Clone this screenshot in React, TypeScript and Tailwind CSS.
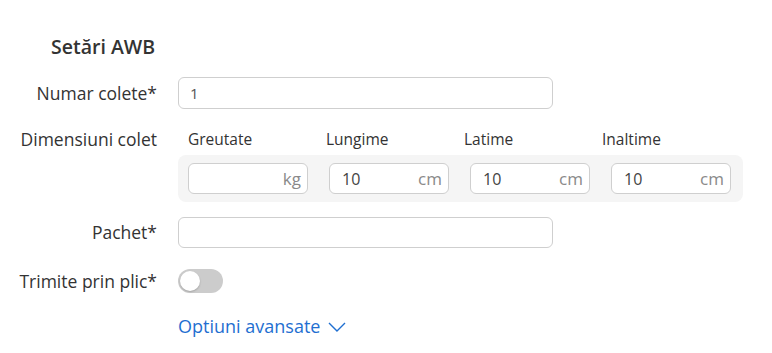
const dims = [
  { label: 'Greutate', value: '', unit: 'kg' },
  { label: 'Lungime', value: '10', unit: 'cm' },
  { label: 'Latime', value: '10', unit: 'cm' },
  { label: 'Inaltime', value: '10', unit: 'cm' },
]

function Label({ children, className = '' }: { children: React.ReactNode; className?: string }) {
  return <div className={`w-[157px] shrink-0 text-right text-[17.5px] text-[#333] ${className}`}>{children}</div>
}

export default function App() {
  return (
    <div className="h-[353px] w-[772px] bg-white pt-[33px] text-[#333]" style={{ fontFamily: '"Open Sans", sans-serif' }}>
      <h2 className="ml-[51px] text-[19.5px] font-semibold leading-[28px] text-[#333]">Setări AWB</h2>

      <div className="mt-[16px] flex items-center gap-[21px]">
        <Label>Numar colete*</Label>
        <div className="flex h-[32px] w-[375px] items-center rounded-[6px] border border-[#cfcfcf] px-[11px] text-[15px] text-[#555]">
          1
        </div>
      </div>

      <div className="mt-[18px] flex gap-[21px]">
        <Label className="leading-[24px]">Dimensiuni colet</Label>
        <div>
          <div className="flex pl-[10px] text-[15.5px] leading-[24px] text-[#333]">
            {dims.map((d) => (
              <div key={d.label} className="w-[138px]">{d.label}</div>
            ))}
          </div>
          <div className="mt-[4px] flex w-[565px] gap-[21px] rounded-[8px] bg-[#f5f5f5] px-[10px] py-[8px]">
            {dims.map((d) => (
              <div
                key={d.label}
                className="flex h-[31px] w-[120px] items-center justify-between rounded-[6px] border border-[#cfcfcf] bg-white pl-[12px] pr-[6px]"
              >
                <span className="text-[16px] text-[#444]">{d.value}</span>
                <span className="text-[17px] text-[#8a8a8a]">{d.unit}</span>
              </div>
            ))}
          </div>
        </div>
      </div>

      <div className="mt-[15px] flex items-center gap-[21px]">
        <Label>Pachet*</Label>
        <div className="h-[31px] w-[375px] rounded-[6px] border border-[#cfcfcf]" />
      </div>

      <div className="mt-[20px] flex items-center gap-[21px]">
        <Label>Trimite prin plic*</Label>
        <div className="flex h-[24px] w-[45px] items-center rounded-full bg-[#cccccc] px-[2px]">
          <div className="h-[20px] w-[20px] rounded-full bg-white shadow-[0_1px_2px_rgba(0,0,0,0.2)]" />
        </div>
      </div>

      <div className="mt-[19px] flex items-center gap-[8px] pl-[178px] text-[18px] text-[#1f6fd1]">
        <span>Optiuni avansate</span>
        <svg width="18" height="10" viewBox="0 0 18 10" fill="none" stroke="currentColor" strokeWidth="1.4" className="mt-[1px]">
          <polyline points="1,1 9,9 17,1" />
        </svg>
      </div>
    </div>
  )
}
